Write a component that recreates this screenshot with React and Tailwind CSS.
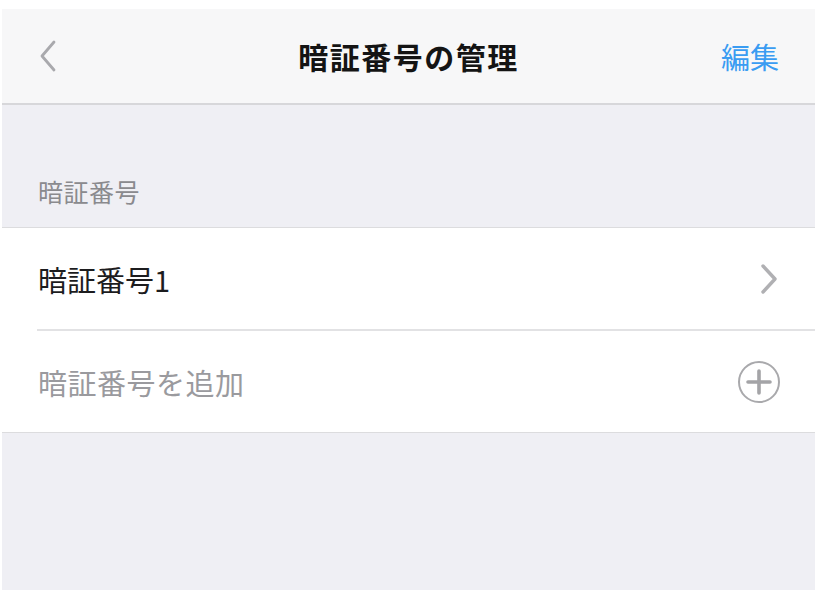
import React from "react";

const font = { fontFamily: '"Noto Sans CJK JP", "Noto Sans", sans-serif' };

function BackIcon() {
  return (
    <svg width="20" height="34" viewBox="0 0 20 34" fill="none">
      <path d="M16 3 L4 17 L16 31" stroke="#a9a9ad" strokeWidth="2.8" strokeLinecap="round" strokeLinejoin="round" />
    </svg>
  );
}

function ChevronRight() {
  return (
    <svg width="20" height="32" viewBox="0 0 20 32" fill="none">
      <path d="M4 3 L16 16 L4 29" stroke="#b0b0b3" strokeWidth="3.4" strokeLinecap="round" strokeLinejoin="round" />
    </svg>
  );
}

function PlusCircle() {
  return (
    <svg width="44" height="44" viewBox="0 0 44 44" fill="none">
      <circle cx="22" cy="22" r="20" stroke="#a9a9ac" strokeWidth="2" />
      <path d="M22 11 V33 M11 22 H33" stroke="#a4a4a7" strokeWidth="3.6" strokeLinecap="round" />
    </svg>
  );
}

export default function App() {
  return (
    <div className="w-[820px] h-[597px] bg-white pt-[9px] pl-[2px] pr-[5px] pb-[7px]" style={font}>
      <div className="h-full flex flex-col bg-[#efeff4]">
        <header className="h-[96px] shrink-0 bg-[#f7f7f8] border-b-2 border-[#d7d7da] flex items-center px-[36px]">
          <div className="w-[60px] flex items-center">
            <BackIcon />
          </div>
          <h1 className="flex-1 text-center text-[30px] leading-[40px] font-bold text-[#141414] tracking-[1.5px]">
            暗証番号の管理
          </h1>
          <button type="button" className="w-[60px] text-right text-[29px] leading-[40px] text-[#3a9cf2]">
            編集
          </button>
        </header>

        <div className="h-[123px] shrink-0 flex items-end px-[36px] pb-[20px] border-b border-[#dcdcde]">
          <span className="text-[25px] leading-[32px] text-[#8a8a8e] tracking-[0.5px]">暗証番号</span>
        </div>

        <div className="bg-white border-b border-[#dcdcde]">
          <div className="h-[101px] flex items-center justify-between px-[36px]">
            <span className="text-[29px] leading-[40px] text-[#1c1c1e]">暗証番号1</span>
            <ChevronRight />
          </div>
          <div className="ml-[35px] h-[2px] bg-[#e2e2e4]" />
          <div className="h-[101px] flex items-center justify-between pl-[36px] pr-[34px]">
            <span className="text-[29px] leading-[40px] text-[#9a9a9e] tracking-[0.5px]">暗証番号を追加</span>
            <PlusCircle />
          </div>
        </div>

        <div className="flex-1" />
      </div>
    </div>
  );
}
